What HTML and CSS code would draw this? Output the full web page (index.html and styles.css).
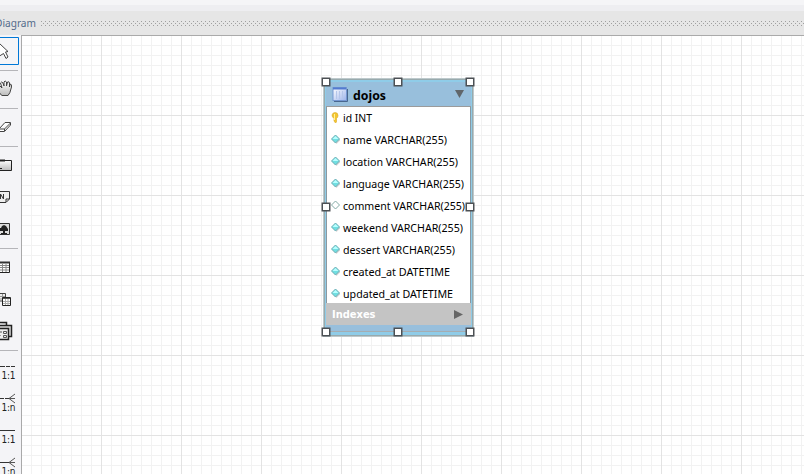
FILE: index.html
```html
<!DOCTYPE html>
<html lang="en"><head><meta charset="utf-8"><title>EER Diagram</title><link rel="stylesheet" href="styles.css"></head>
<body>
<div class="strip-a"></div><div class="strip-b"></div>
<header class="caption"><svg class="caption-text" width="36" height="24"><text x="-5" y="16" textLength="41" lengthAdjust="spacingAndGlyphs">Diagram</text></svg>
<svg class="grip" width="764" height="5" shape-rendering="crispEdges"><defs><pattern id="dots" width="4" height="4" patternUnits="userSpaceOnUse"><path d="M0 0h1v1H0zM2 2h1v1H2z" fill="#a0a0a0"/></pattern></defs><rect width="764" height="5" fill="url(#dots)"/></svg></header>
<main class="work">
<nav class="tools">
<svg width="21" height="438" viewBox="0 36 21 438">
<defs><linearGradient id="hand" x2="0" y2="1"><stop stop-color="#fff"/><stop offset="1" stop-color="#bbb"/></linearGradient></defs>
<path d="M-2 37.5H18.500V64.500H-2z" fill="#f5f5f7" stroke="#0078d7"/>
<path d="M-.5 43.500L8 51.500L5.500 52L8 57L6 58.500L3.500 53.500L-.5 56" fill="#fff" stroke="#444"/>
<path d="M0 70.500H18M0 108.500H18M0 146.500H18M0 248.500H18M0 350.500H18" stroke="#b5b5b9"/>
<path d="M-1 88L0 86L2 88L.5 83Q1.500 81 3 83L4 86V82Q5 80 6.500 82V86L7.500 82Q9 81 9.500 83V87L10 84Q12 84 11.500 87Q10 94 8 95.500H2Q0 94-2 91" fill="url(#hand)" stroke="#444"/>
<path d="M-1 129L5 122.500H10.500V125L4.500 131.500H-1M-1 129H4.500L10.500 123M4.500 129V131" fill="#fff" stroke="#444"/>
<path d="M-1 160.500H11.500V170.500H-1" fill="url(#hand)" stroke="#222"/><path d="M0 160.500H5" stroke="#222" stroke-width="2"/><path d="M0 168.500H2" stroke="#222"/>
<path d="M-1 191.500H9.500V199L6 202.500H-1M6 202V199H9" fill="#eee" stroke="#333"/><path d="M.5 199V194L3.500 199V194" fill="none" stroke="#333"/>
<path d="M-1 223.500H9.500V234.500H-1" fill="#ddd" stroke="#333"/><path d="M3 233V231H0V228H1L2 226L4 225L6 226L8 229V231H5V233H7V234H1V233" fill="#222"/>
<path d="M-1 262.500H9.500V272.500H-1" fill="#fff" stroke="#222"/><path d="M0 262.500H10" stroke="#333" stroke-width="2"/><path d="M0 265.500H9M0 267.500H9M0 270H9M2.500 264V272M6 264V272" stroke="#888"/>
<path d="M-1 293.500H5.500V301H-1" fill="#eee" stroke="#444"/><path d="M0 296.500H5M0 299H5M2.500 294V301" stroke="#999"/><path d="M2.500 297.500H10.500V305.500H2.500z" fill="#fff" stroke="#222"/><path d="M3 298.500H10" stroke="#555"/><path d="M3 301.500H10M3 303.500H10M5.500 299V305M8 299V305" stroke="#aaa"/>
<path d="M-1 322.500H6.500V325" fill="#ddd" stroke="#222" stroke-width="1.500"/><path d="M-1 325.500H11.500V336.500H-1z" fill="#ddd" stroke="#222" stroke-width="1.500"/><path d="M-1 328.500H8.500V339.500H-1" fill="#eee" stroke="#222" stroke-width="1.500"/><path d="M0 332H2M3.500 331.500H6.500V333.500H3.500zM3.500 335.500H6.500V337.500H3.500zM0 335V336" fill="none" stroke="#555"/>
<path d="M0 366.500H5M6 366.500H10M11 366.500H15M0 398.500H4M5 398.500H9M0 430.500H15M0 462.500H9" stroke="#333"/>
<path d="M9 398.500L15 394M9 398.500H15M9 398.500L15 403M9 462.500L15 458M9 462.500H15M9 462.500L15 467" fill="none" stroke="#555"/>
<g class="rel"><text x="1.500" y="379" textLength="14">1:1</text><text x="1.500" y="411" textLength="14">1:n</text><text x="1.500" y="443" textLength="14">1:1</text><text x="1.500" y="475" textLength="14">1:n</text></g>
</svg></nav>
<section class="canvas">
<svg class="grid" width="782" height="438" shape-rendering="crispEdges"><defs><pattern id="minor" x="9" y="9" width="10" height="10" patternUnits="userSpaceOnUse"><path d="M0 0H10V1H1V10H0z" fill="#f2f2f2"/></pattern><pattern id="major" x="79" y="79" width="80" height="80" patternUnits="userSpaceOnUse"><path d="M0 0H80V1H1V80H0z" fill="#e3e3e3"/></pattern></defs><rect width="782" height="438" fill="url(#minor)"/><rect width="782" height="438" fill="url(#major)"/></svg>
<article class="entity">
<header class="title"><svg width="17" height="17"><defs><linearGradient id="tb" x2="1" y2="1"><stop stop-color="#fff"/><stop offset="1" stop-color="#9db4ec"/></linearGradient></defs><path d="M2 15.500H15.500V3" fill="none" stroke="#49678f"/><rect x="1" y="1.500" width="13.500" height="13" fill="url(#tb)" stroke="#7598d2"/><path d="M1 2.500H14" stroke="#537bd0" stroke-width="2"/><path d="M4.500 5V13M7.500 5V13M10.500 5V13" stroke="#b5c6ea"/></svg><svg class="name" width="40" height="20"><text y="16" textLength="33" lengthAdjust="spacingAndGlyphs">dojos</text></svg><svg class="arrow" width="10" height="8"><path d="M0 0H9L4.500 8z" fill="#60666b"/></svg></header>
<ul class="cols">
<li><svg width="10" height="12"><path d="M5 .5Q8 .5 8 3.500Q8 5.500 6.500 6.500V10L5.500 11L4 9V6.500Q2 5 2 3Q2.500 .5 5 .5" fill="#f3c62f" stroke="#dca927" stroke-width=".6"/><path d="M4.500 2V8" stroke="#fff09a"/></svg><svg class="label" width="125" height="22"><text x="0" y="15" textLength="29" lengthAdjust="spacingAndGlyphs">id INT</text></svg></li>
<li><svg width="10" height="12"><use href="#gem"/></svg><svg class="label" width="125" height="22"><text y="15" textLength="104" lengthAdjust="spacingAndGlyphs">name VARCHAR(255)</text></svg></li>
<li><svg width="10" height="12"><use href="#gem"/></svg><svg class="label" width="125" height="22"><text y="15" textLength="115" lengthAdjust="spacingAndGlyphs">location VARCHAR(255)</text></svg></li>
<li><svg width="10" height="12"><use href="#gem"/></svg><svg class="label" width="125" height="22"><text y="15" textLength="121" lengthAdjust="spacingAndGlyphs">language VARCHAR(255)</text></svg></li>
<li><svg width="10" height="12"><path d="M5.500 1L9.500 5L5.500 9L1.500 5z" fill="#fff" stroke="#83aaa5"/></svg><svg class="label" width="125" height="22"><text y="15" textLength="122" lengthAdjust="spacingAndGlyphs">comment VARCHAR(255)</text></svg></li>
<li><svg width="10" height="12"><use href="#gem"/></svg><svg class="label" width="125" height="22"><text y="15" textLength="120" lengthAdjust="spacingAndGlyphs">weekend VARCHAR(255)</text></svg></li>
<li><svg width="10" height="12"><use href="#gem"/></svg><svg class="label" width="125" height="22"><text y="15" textLength="112" lengthAdjust="spacingAndGlyphs">dessert VARCHAR(255)</text></svg></li>
<li><svg width="10" height="12"><use href="#gem"/></svg><svg class="label" width="125" height="22"><text y="15" textLength="107" lengthAdjust="spacingAndGlyphs">created_at DATETIME</text></svg></li>
<li><svg width="10" height="12"><use href="#gem"/></svg><svg class="label" width="125" height="22"><text y="15" textLength="110" lengthAdjust="spacingAndGlyphs">updated_at DATETIME</text></svg></li>
</ul>
<div class="indexes"><span>Indexes</span><svg width="9" height="10"><path d="M0 0L9 4.500L0 9z" fill="#666"/></svg></div>
<div class="foot"></div>
<svg class="handles" width="154" height="260"><defs><g id="gem"><path d="M6.500 2L10.500 6L6.500 10L2.500 6z" fill="#bbb" opacity=".6"/><path d="M5.500 1L9.500 5L5.500 9L1.500 5z" fill="#70dfe2" stroke="#70aeb5"/><path d="M5.500 2L8.500 5H2.500z" fill="#b8ffff"/></g><rect id="h" x=".75" y=".75" width="7.500" height="7.500" fill="#fff" stroke="#4c5054" stroke-width="1.500"/></defs><g transform="translate(-.5 .5)"><use href="#h"/><use href="#h" x="72"/><use href="#h" x="144"/><use href="#h" y="125"/><use href="#h" x="144" y="125"/><use href="#h" y="250"/><use href="#h" x="72" y="250"/><use href="#h" x="144" y="250"/></g></svg>
</article></section></main></body></html>
```

FILE: styles.css
```css
* { box-sizing: border-box; }
body { margin: 0; width: 804px; height: 474px; overflow: hidden; font-family: "DejaVu Sans Condensed", "DejaVu Sans", sans-serif; background: #f4f4f7; }
svg { display: block; flex: none; }
.strip-a { height: 5px; background: #f5f5f7; }
.strip-b { height: 6px; background: #eeeef1; }
.caption { height: 24px; background: #e6e6e6; display: flex; overflow: hidden; }
.caption-text { font: 11px "Noto Sans", sans-serif; fill: #536b8b; }
.grip { margin: 10px 0 0 5px; }
.work { display: flex; height: 439px; }
.tools { width: 21px; padding-top: 1px; overflow: hidden; flex: none; }
.rel { font: 10px "DejaVu Sans Condensed", sans-serif; fill: #222; }
.canvas { position: relative; flex: 1; border: solid #aaa; border-width: 1px 0 0 1px; background: #fff; }
.entity { position: absolute; left: 302px; top: 43px; width: 149px; height: 257px; border: 1px solid #99aaad; outline: 1px solid #bdc9cc; padding: 2px 1px; background: #8fcce8; }
.title { height: 25px; background: #98bfdc; display: flex; align-items: center; padding: 0 6px 0 6px; border-bottom: 1px solid #9b9b9b; }
.name { font: bold 13px "Noto Sans", sans-serif; margin: 0 auto 0 4px; }
.cols { list-style: none; margin: 0; padding: 0; height: 196px; background: #fff; border: solid #8999a2; border-width: 0 1px; }
.cols li { height: 22px; display: flex; align-items: center; padding-left: 3px; }
.label { margin-left: 2.5px; overflow: visible; font: 11.5px "Noto Sans", sans-serif; fill: #000; }
.indexes { height: 22px; display: flex; align-items: center; justify-content: space-between; padding: 1px 8px 0 6px; background: #c4c4c4; color: #fff; font: bold 11px "DejaVu Sans Condensed", sans-serif; }
.foot { height: 7px; background: #98bfdc; border-bottom: 1px solid #a5adb2; }
.handles { position: absolute; left: -3px; top: -3px; overflow: visible; }
```
